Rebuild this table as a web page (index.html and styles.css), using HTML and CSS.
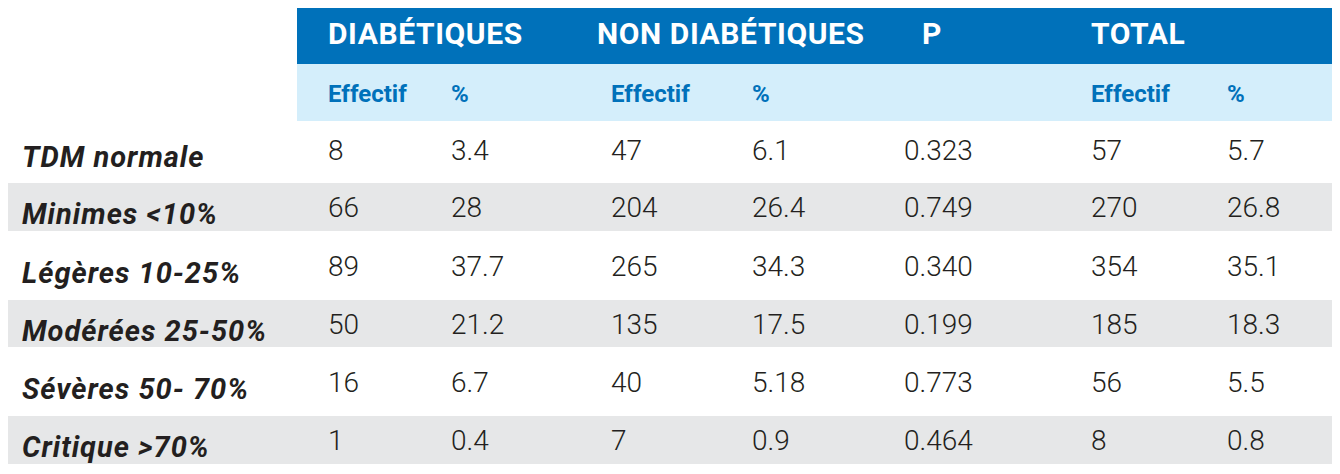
FILE: index.html
```html
<!DOCTYPE html>
<html lang="fr">
<head>
<meta charset="utf-8">
<title>Tableau TDM</title>
<link rel="stylesheet" href="styles.css">
</head>
<body>
<div class="table">
  <div class="row head">
    <div class="blank"></div>
    <div class="hcell">DIABÉTIQUES</div>
    <div class="hcell">NON DIABÉTIQUES</div>
    <div class="hcell">P</div>
    <div class="hcell">TOTAL</div>
  </div>
  <div class="row sub">
    <div class="blank"></div>
    <div class="scell">Effectif</div>
    <div class="scell">%</div>
    <div class="scell">Effectif</div>
    <div class="scell">%</div>
    <div class="scell"></div>
    <div class="scell">Effectif</div>
    <div class="scell">%</div>
  </div>
  <div class="row data data--first">
    <div class="label">TDM normale</div>
    <div class="num">8</div><div class="num">3.4</div><div class="num">47</div><div class="num">6.1</div><div class="num">0.323</div><div class="num">57</div><div class="num">5.7</div>
  </div>
  <div class="row data data--grey">
    <div class="label">Minimes &lt;10%</div>
    <div class="num">66</div><div class="num">28</div><div class="num">204</div><div class="num">26.4</div><div class="num">0.749</div><div class="num">270</div><div class="num">26.8</div>
  </div>
  <div class="row data data--white">
    <div class="label">Légères 10-25%</div>
    <div class="num">89</div><div class="num">37.7</div><div class="num">265</div><div class="num">34.3</div><div class="num">0.340</div><div class="num">354</div><div class="num">35.1</div>
  </div>
  <div class="row data data--grey data--short">
    <div class="label">Modérées 25-50%</div>
    <div class="num">50</div><div class="num">21.2</div><div class="num">135</div><div class="num">17.5</div><div class="num">0.199</div><div class="num">185</div><div class="num">18.3</div>
  </div>
  <div class="row data data--white">
    <div class="label">Sévères 50- 70%</div>
    <div class="num">16</div><div class="num">6.7</div><div class="num">40</div><div class="num">5.18</div><div class="num">0.773</div><div class="num">56</div><div class="num">5.5</div>
  </div>
  <div class="row data data--grey">
    <div class="label">Critique &gt;70%</div>
    <div class="num">1</div><div class="num">0.4</div><div class="num">7</div><div class="num">0.9</div><div class="num">0.464</div><div class="num">8</div><div class="num">0.8</div>
  </div>
</div>
</body>
</html>
```
FILE: styles.css
```css
html, body {
  margin: 0;
  background: #ffffff;
}
body {
  padding: 8px 8px 0 8px;
  font-family: Roboto, "Liberation Sans", sans-serif;
  color: #231f20;
}
.table {
  width: 1324px;
}
.row {
  display: grid;
  grid-template-columns: 289px 123px 160px 141px 152px 187px 136px 136px;
}
.head {
  grid-template-columns: 289px 269px 325px 169px 272px;
  height: 56px;
}
.hcell {
  background: #0071ba;
  color: #ffffff;
  font-weight: 700;
  font-size: 30px;
  line-height: 30px;
  padding: 11px 0 0 31px;
  letter-spacing: 0.6px;
}
.sub {
  height: 57px;
}
.scell {
  background: #d4eefb;
  color: #0071ba;
  font-weight: 700;
  font-size: 24px;
  line-height: 24px;
  padding: 18px 0 0 31px;
}
.data {
  height: 62px;
}
.data--grey {
  background: #e6e7e8;
  height: 48px;
}
.data--short {
  height: 47px;
}
.data--white {
  height: 69px;
}
.num {
  font-weight: 300;
  font-size: 28px;
  line-height: 30px;
  padding: 15px 0 0 31px;
}
.label {
  font-weight: 700;
  font-style: italic;
  font-size: 29px;
  line-height: 30px;
  letter-spacing: 1px;
  padding: 21px 0 0 14px;
}
.data--grey .num {
  padding-top: 10px;
}
.data--grey .label {
  padding-top: 16px;
}
.data--white .num {
  padding-top: 21px;
}
.data--white .label {
  padding-top: 27px;
}
```
